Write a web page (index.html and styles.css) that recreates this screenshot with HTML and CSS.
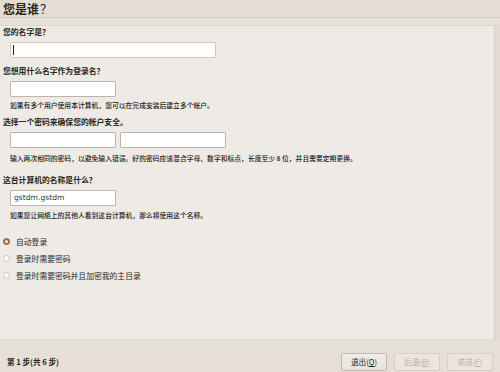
FILE: index.html
```html
<!DOCTYPE html>
<html lang="zh-CN">
<head>
  <meta charset="UTF-8">
  <title>您是谁？</title>
  <link rel="stylesheet" href="styles.css">
</head>
<body>
  <div class="window">
    <div class="header">您是谁<span class="qmark">？</span></div>
    <div class="band"></div>
    <div class="main">
      <div class="panel">
        <div class="label first">您的名字是？</div>
        <div class="field wide focused"><span class="caret"></span></div>

        <div class="label gap-a">您想用什么名字作为登录名？</div>
        <div class="field narrow"></div>
        <div class="hint">如果有多个用户使用本计算机，您可以在完成安装后建立多个帐户。</div>

        <div class="label gap-b">选择一个密码来确保您的帐户安全。</div>
        <div class="pair">
          <div class="field narrow"></div>
          <div class="field narrow"></div>
        </div>
        <div class="hint gap-c">输入两次相同的密码，以避免输入错误。好的密码应该混合字母、数字和标点，长度至少 8 位，并且需要定期更换。</div>

        <div class="label gap-d">这台计算机的名称是什么？</div>
        <div class="field narrow host">gstdm.gstdm</div>
        <div class="hint gap-e">如果您让网络上的其他人看到这台计算机，那么将使用这个名称。</div>

        <div class="options">
          <div class="option"><span class="radio checked"></span>自动登录</div>
          <div class="option"><span class="radio"></span>登录时需要密码</div>
          <div class="option"><span class="radio"></span>登录时需要密码并且加密我的主目录</div>
        </div>
      </div>
      <div class="edge"></div>
    </div>
    <div class="footer">
      <div class="step">第 1 步(共 6 步)</div>
      <div class="buttons">
        <span class="btn">退出(<u>Q</u>)</span>
        <span class="btn disabled">后退(<u>B</u>)</span>
        <span class="btn disabled">前进(<u>F</u>)</span>
      </div>
    </div>
  </div>
</body>
</html>
```

FILE: styles.css
```css
body {
  margin: 0;
  padding: 0;
  font-family: "Noto Sans CJK SC", "DejaVu Sans", sans-serif;
  color: #2a2622;
  background: #e6dfd7;
}
.window {
  width: 500px;
  height: 372px;
  overflow: hidden;
  display: flex;
  flex-direction: column;
}
.header {
  height: 17px;
  line-height: 17px;
  padding-left: 3px;
  font-size: 12px;
  font-weight: bold;
  background: #e4ddd4;
  border-bottom: 1px solid #d0c8bf;
}
.qmark {
  font-weight: normal;
  margin-left: 1px;
}
.band {
  height: 7px;
  background: #e7e0d8;
  border-bottom: 1px solid #ddd5cc;
}
.main {
  display: flex;
  height: 314px;
}
.panel {
  flex: 1;
  background: #eeeae5;
  border-bottom: 1px solid #e3dcd4;
}
.edge {
  width: 5px;
  background: #e2dbd3;
  border-left: 1px solid #d9d2ca;
}
.label {
  padding-left: 3px;
  font-size: 7.8px;
  font-weight: bold;
  line-height: 12px;
}
.first {
  margin-top: 0;
}
.gap-a {
  margin-top: 7px;
}
.gap-b {
  margin-top: 6px;
}
.gap-d {
  margin-top: 11px;
}
.field {
  height: 14px;
  margin-left: 10px;
  background: #fff;
  border: 1px solid #bdb5ac;
  border-radius: 1px;
  font-family: "DejaVu Sans", sans-serif;
  font-size: 7.6px;
  line-height: 14px;
  padding-left: 3px;
  box-sizing: content-box;
}
.label + .field {
  margin-top: 4px;
}
.label + .pair {
  margin-top: 4px;
}
.wide {
  width: 201px;
}
.narrow {
  width: 101px;
}
.focused {
  border-color: #dcc3bb;
  position: relative;
}
.caret {
  position: absolute;
  left: 2px;
  top: 2px;
  width: 1px;
  height: 10px;
  background: #222;
}
.host {
  margin-top: 5px;
  color: #333;
}
.pair {
  display: flex;
  gap: 4px;
}
.pair .field {
  margin-left: 0;
}
.pair .field:first-child {
  margin-left: 10px;
}
.hint {
  margin-top: 3px;
  padding-left: 10px;
  font-size: 6.8px;
  line-height: 10px;
  font-weight: 500;
  color: #1f1b18;
  white-space: nowrap;
}
.gap-c {
  margin-top: 5px;
}
.gap-e {
  margin-top: 4px;
}
.options {
  margin-top: 13px;
}
.option {
  display: flex;
  align-items: center;
  height: 17px;
  font-size: 7.8px;
}
.radio {
  width: 5px;
  height: 5px;
  margin: 0 6px 0 3px;
  border: 1px solid #c9c2ba;
  border-radius: 50%;
  background: #fbfaf8;
}
.radio.checked {
  width: 3px;
  height: 3px;
  border: 2px solid #a2703f;
  background: #f7efe6;
}
.footer {
  flex: 1;
  display: flex;
  justify-content: space-between;
  align-items: flex-start;
  padding: 13px 7px 0 7px;
  background: #e6dfd7;
}
.step {
  font-size: 7.6px;
  font-weight: bold;
  line-height: 18px;
}
.buttons {
  display: flex;
  gap: 7px;
}
.btn {
  width: 44px;
  height: 16px;
  line-height: 16px;
  text-align: center;
  font-size: 7.6px;
  border: 1px solid #c3bbb2;
  border-radius: 2px;
  background: linear-gradient(#f1ece7, #e8e2db);
}
.btn.disabled {
  color: #b8afa6;
  border-color: #d6cfc7;
  background: #ebe5de;
}
```
